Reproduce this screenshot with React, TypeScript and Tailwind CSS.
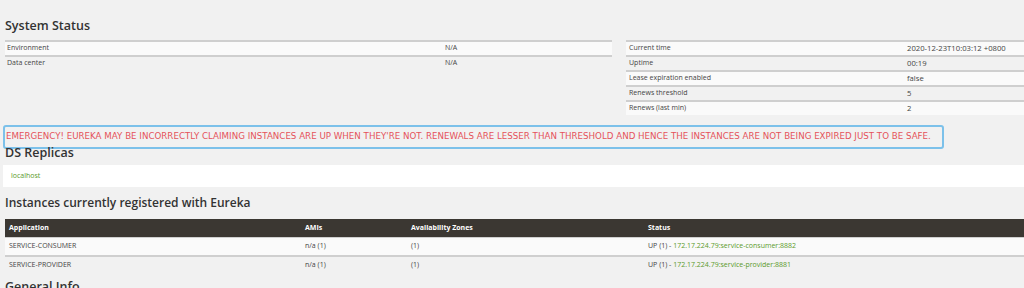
import React from "react";

const body = { fontFamily: '"Open Sans", "DejaVu Sans", sans-serif' };
const head = { fontFamily: '"Open Sans", "DejaVu Sans", sans-serif' };
const alertFont = { fontFamily: '"DejaVu Sans", "Open Sans", sans-serif' };

export default function App() {
  const leftRows = [
    ["Environment", "N/A"],
    ["Data center", "N/A"],
  ];
  const rightRows = [
    ["Current time", "2020-12-23T10:03:12 +0800"],
    ["Uptime", "00:19"],
    ["Lease expiration enabled", "false"],
    ["Renews threshold", "5"],
    ["Renews (last min)", "2"],
  ];
  const inst = [
    ["SERVICE-CONSUMER", "n/a (1)", "(1)", "172.17.224.79:service-consumer:8882"],
    ["SERVICE-PROVIDER", "n/a (1)", "(1)", "172.17.224.79:service-provider:8881"],
  ];
  return (
    <div className="w-[1024px] h-[288px] overflow-hidden bg-[#f1f1f1] text-[#444]" style={body}>
      <div className="pt-[18px] pl-[5px]">
        <h2 className="text-[12.5px] font-semibold text-[#333] leading-[16px]" style={head}>System Status</h2>
        <div className="flex mt-[6px]">
          <div className="w-[607px]">
            {leftRows.map((r, i) => (
              <div key={i} className={`flex h-[15px] items-center text-[7px] border-t-2 border-[#cfcfcf] ${i % 2 === 0 ? "bg-[#fafafa]" : ""}`}>
                <div className="w-[440px] pl-[2px]">{r[0]}</div>
                <div>{r[1]}</div>
              </div>
            ))}
          </div>
          <div className="ml-[14px] w-[398px]">
            {rightRows.map((r, i) => (
              <div key={i} className={`flex h-[15px] items-center text-[7px] border-t-2 border-[#cfcfcf] ${i % 2 === 0 ? "bg-[#fafafa]" : ""}`}>
                <div className="w-[281px] pl-[3px]">{r[0]}</div>
                <div className="text-[7.7px]">{r[1]}</div>
              </div>
            ))}
          </div>
        </div>
      </div>
      <div className="mt-[10px] ml-[3px] w-[941px] h-[24px] border-2 border-[#7cc1ea] rounded-[3px] flex items-center pl-[1px]">
        <span className="text-[8.7px] text-[#e5525a] whitespace-nowrap" style={alertFont}>EMERGENCY! EUREKA MAY BE INCORRECTLY CLAIMING INSTANCES ARE UP WHEN THEY'RE NOT. RENEWALS ARE LESSER THAN THRESHOLD AND HENCE THE INSTANCES ARE NOT BEING EXPIRED JUST TO BE SAFE.</span>
      </div>
      <div className="pl-[5px]">
        <h2 className="text-[12.5px] font-semibold text-[#333] leading-[16px] -mt-[4px]" style={head}>DS Replicas</h2>
      </div>
      <div className="mt-[4px] ml-[3px] h-[22px] bg-white flex items-center pl-[8px] text-[7px] text-[#5a9a2a]">localhost</div>
      <div className="pl-[5px]">
        <h2 className="text-[12px] font-semibold text-[#333] leading-[16px] mt-[8px]" style={head}>Instances currently registered with Eureka</h2>
        <div className="mt-[8px]">
          <div className="flex h-[18px] items-center bg-[#3b3732] text-white text-[7px] font-bold">
            <div className="w-[296px] pl-[4px]">Application</div>
            <div className="w-[106px] pl-[4px]">AMIs</div>
            <div className="w-[237px] pl-[4px]">Availability Zones</div>
            <div className="pl-[4px]">Status</div>
          </div>
          {inst.map((r, i) => (
            <div key={i} className={`flex h-[18px] items-center text-[7px] ${i % 2 === 0 ? "bg-[#fafafa]" : ""} ${i > 0 ? "border-t-2 border-[#cfcfcf]" : "border-t border-[#cfcfcf]"}`}>
              <div className="w-[296px] pl-[4px]">{r[0]}</div>
              <div className="w-[106px] pl-[4px]">{r[1]}</div>
              <div className="w-[237px] pl-[4px]">{r[2]}</div>
              <div className="pl-[4px]">UP (1) - <span className="text-[#5a9a2a]">{r[3]}</span></div>
            </div>
          ))}
        </div>
        <h2 className="text-[12.5px] font-semibold text-[#333] leading-[16px] mt-[6px]" style={head}>General Info</h2>
      </div>
    </div>
  );
}
